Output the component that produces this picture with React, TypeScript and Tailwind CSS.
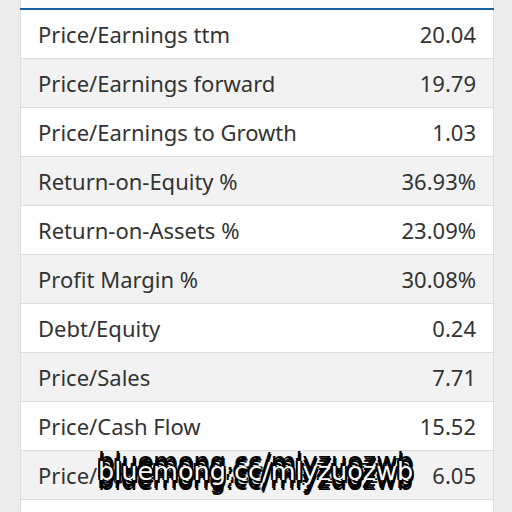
const rows: [string, string][] = [
  ["Price/Earnings ttm", "20.04"],
  ["Price/Earnings forward", "19.79"],
  ["Price/Earnings to Growth", "1.03"],
  ["Return-on-Equity %", "36.93%"],
  ["Return-on-Assets %", "23.09%"],
  ["Profit Margin %", "30.08%"],
  ["Debt/Equity", "0.24"],
  ["Price/Sales", "7.71"],
  ["Price/Cash Flow", "15.52"],
  ["Price/Book", "6.05"],
  ["", ""],
];

export default function App() {
  return (
    <main className="relative h-[512px] w-[512px] overflow-hidden bg-[#ececec] pl-[20px] pr-[18px] font-['Noto_Sans',sans-serif] text-[#333]">
      <div className="h-[8px] border-x border-[#dcdcdc] bg-[#fbfbfb]" />
      <div className="border-t-2 border-[#1d5fa6]">
        {rows.map(([label, value], i) => (
          <div
            key={i}
            className={`flex h-[49px] items-center justify-between border-x border-b border-[#dcdcdc] pl-[17px] pr-[17px] text-[22px] ${
              i % 2 === 1 ? "bg-[#f2f2f2]" : "bg-white"
            }`}
          >
            <span>{label}</span>
            <span>{value}</span>
          </div>
        ))}
      </div>

      <span className="absolute left-[98px] top-[452px] font-['DejaVu_Sans',sans-serif] text-[25.5px] leading-[38px] text-white [text-shadow:0_-6px_0_#000,0_6px_0_#000,-2px_-3px_0_#000,2px_3px_0_#000,-2px_0_0_#000,2px_0_0_#000,0_-10px_0_#000,0_10px_0_#000,1px_-8px_0_#000,-1px_8px_0_#000]">
        bluemong.cc/mlyzuozwb
      </span>
    </main>
  );
}
